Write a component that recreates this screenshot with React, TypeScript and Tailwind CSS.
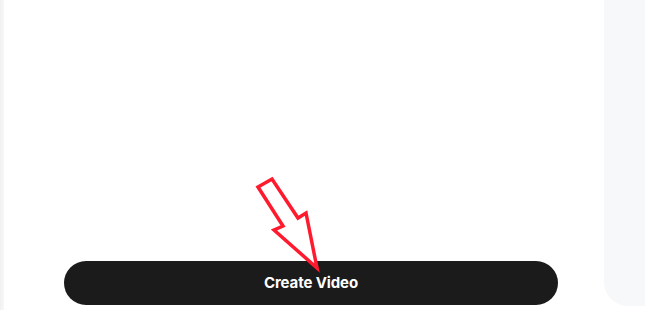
export default function App() {
  return (
    <div className="flex h-[310px] w-[645px] overflow-hidden bg-white font-['Inter',sans-serif]">
      <div className="w-[4px] bg-gradient-to-r from-[#f1f1f1] to-[#f8f8f8]" />

      <main className="relative flex flex-1 flex-col justify-end pb-[5px] pl-[60px] pr-[46px]">
        <button
          type="button"
          className="flex h-[44px] w-full items-center justify-center rounded-full bg-[#1b1b1b] text-[15px] font-bold tracking-[-0.1px] text-white"
        >
          Create Video
        </button>

        {/* red pointer arrow over the button */}
        <svg
          className="pointer-events-none absolute left-0 top-0"
          width="600"
          height="310"
          viewBox="0 0 600 310"
          aria-hidden="true"
        >
          <polygon
            points="254,187 268,179 294,218 302,213 313,268 270,230 279,226"
            fill="white"
            stroke="#ff1a2e"
            strokeWidth="3.5"
            strokeLinejoin="miter"
          />
        </svg>
      </main>

      <aside className="h-[306px] w-[41px] rounded-bl-[24px] bg-[#f7f8fa]" />
    </div>
  );
}
